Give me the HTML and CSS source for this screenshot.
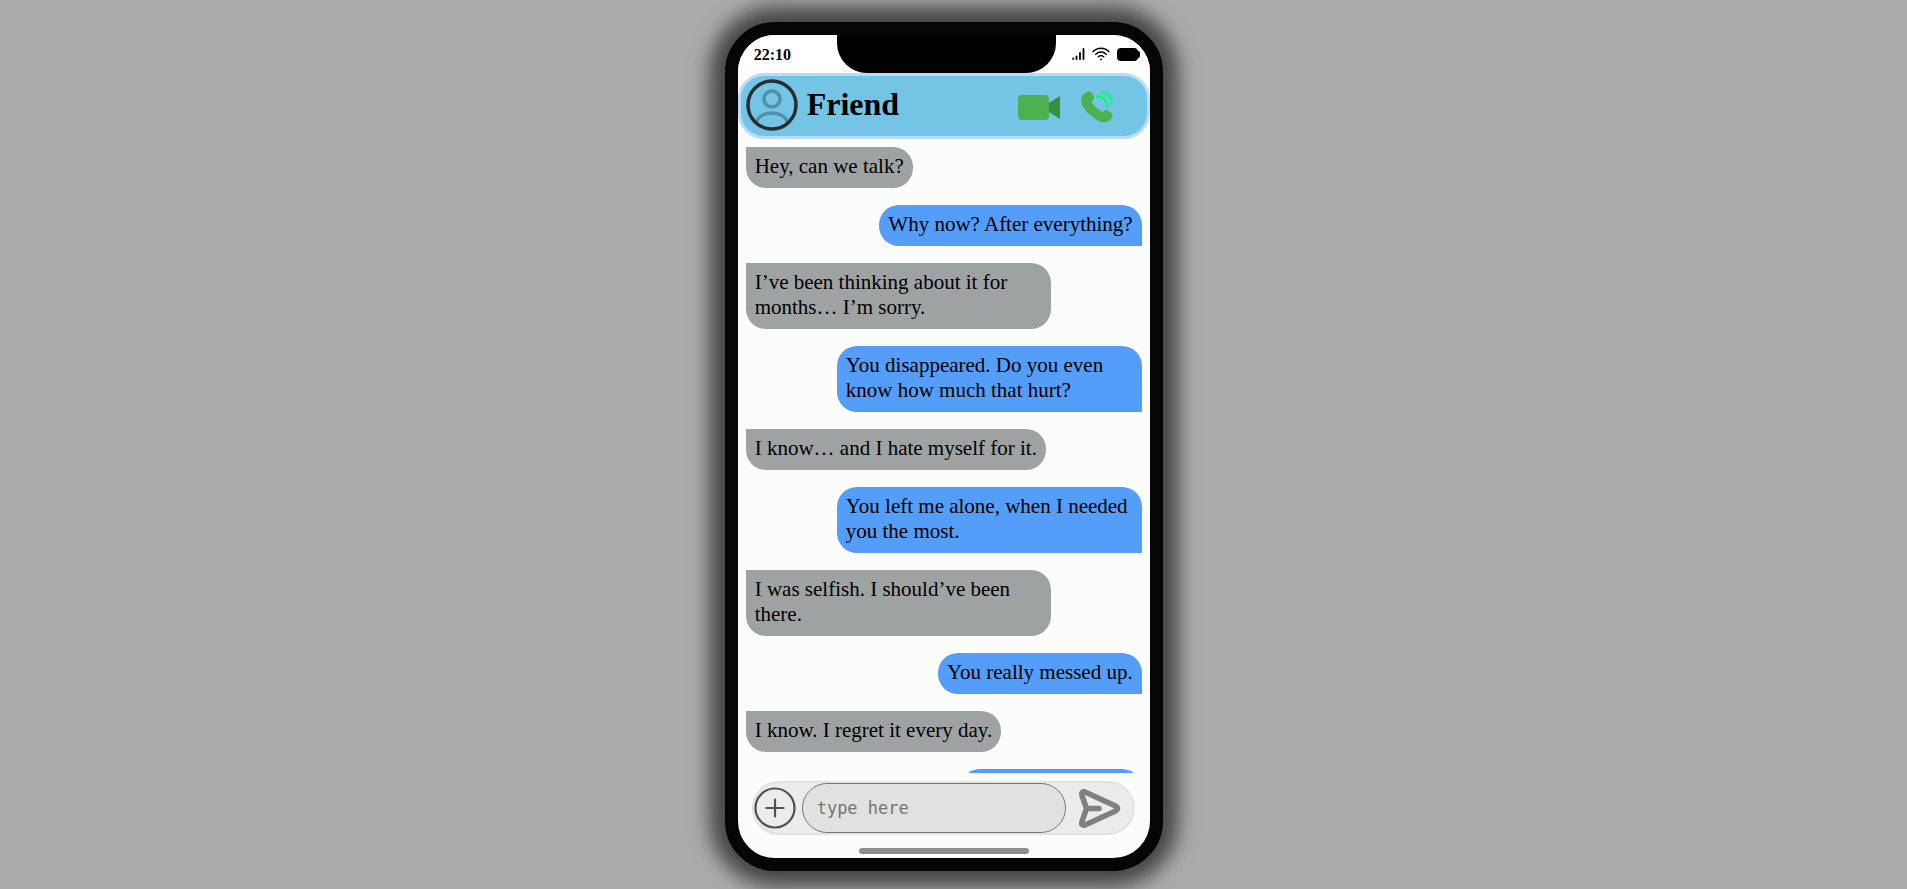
FILE: index.html
```html
<!DOCTYPE html>
<html lang="en">
<head>
<meta charset="utf-8">
<meta name="viewport" content="width=device-width, initial-scale=1">
<title>Friend</title>
<link rel="stylesheet" href="styles.css">
</head>
<body>
<main class="phone">
  <div class="status">
    <time class="clock">22:10</time>
    <div class="notch"></div>
    <div class="indicators">
      <svg class="signal" viewBox="0 0 13 12" aria-hidden="true"><path d="M1.2 10.500v.5M4.500 8.500v2.500M8 5v6M11.500 1v10" fill="none" stroke="#000" stroke-width="1.8" stroke-linecap="round"/></svg>
      <svg class="wifi" viewBox="0 0 18 14" aria-hidden="true"><g fill="none" stroke="#000" stroke-width="1.5" stroke-linecap="round"><path d="M1.2 4.6C5.4.2 12.6.2 16.8 4.6"/><path d="M3.8 7.2c2.900-2.800 7.500-2.800 10.400 0"/><path d="M6.300 9.800c1.500-1.400 3.900-1.400 5.400 0"/></g><circle cx="9" cy="12.400" r=".9"/></svg>
      <svg class="battery" viewBox="0 0 24 13" aria-hidden="true"><rect width="21" height="13" rx="4"/><rect x="19" y="3" width="4" height="7" rx="2"/></svg>
    </div>
  </div>
  <header class="top">
    <svg class="avatar" viewBox="0 0 52 52" role="img" aria-label="Profile picture"><g fill="none" stroke-width="3.500"><g stroke="#548faa"><circle cx="26" cy="20" r="8"/><path d="M10.500 42.500c2.500-5 8.500-8.500 15.500-8.500s13 3.500 15.500 8.500"/></g><circle cx="26" cy="26" r="24" stroke="#292d32"/></g></svg>
    <h1 class="name">Friend</h1>
    <div class="calls">
      <button class="icon-button" type="button" aria-label="Video call"><svg class="video" viewBox="0 0 42 25"><path d="M30 8.500 42 1v23l-12-7.500z" fill="#388e3c"/><rect width="31" height="25" rx="4" fill="#4caf50"/></svg></button>
      <button class="icon-button" type="button" aria-label="Voice call"><svg class="voice" viewBox="0 0 32 32"><path d="M8 .6C10 .6 10.700 1.800 12.200 4.400c1.200 2 .8 3.600-.8 5.100-.8.800-.6 1.700.2 2.700 2.300 3.200 5 5.800 8.100 8 1 .7 1.900.9 2.700.1 1.700-1.700 3.200-1.600 5.200-.4 2.600 1.600 3.900 2.400 3.900 4.400 0 3.400-4.200 7-8.500 7-3.500 0-6.300-1.200-9.200-3.500C9.600 24.600 5.400 20.600 2.800 16.900.8 14 .3 11.600.3 9.200.3 4.500 4.500.6 8 .6z" fill="#4caf50"/><g fill="none" stroke="#00ff6a" stroke-width="2" stroke-linecap="round"><path d="M16 5.500c6.500.2 10 4 10.200 10.300"/><path d="M19.800 1.400C26.300 1.400 31 6 31 12.600"/></g></svg></button>
    </div>
  </header>
  <section class="chat" aria-label="Messages">
    <p class="message received">Hey, can we talk?</p>
    <p class="message sent">Why now? After everything?</p>
    <p class="message received">I’ve been thinking about it for months… I’m sorry.</p>
    <p class="message sent">You disappeared. Do you even know how much that hurt?</p>
    <p class="message received">I know… and I hate myself for it.</p>
    <p class="message sent">You left me alone, when I needed you the most.</p>
    <p class="message received">I was selfish. I should’ve been there.</p>
    <p class="message sent">You really messed up.</p>
    <p class="message received">I know. I regret it every day.</p>
    <p class="message sent next"></p>
  </section>
  <form class="composer">
    <button class="icon-button" type="button" aria-label="Add attachment"><svg class="plus" viewBox="0 0 42 42"><g fill="none" stroke="#505050" stroke-width="2.200" stroke-linecap="round"><circle cx="21" cy="21" r="19.500"/><path d="M21 12.500v17M12.500 21h17"/></g></svg></button>
    <input class="field" type="text" placeholder="type here" aria-label="Message">
    <button class="icon-button send-button" type="submit" aria-label="Send"><svg class="send" viewBox="0 0 42 39"><path d="M7.500 19.500 3 6.500C2 3.400 4 2 6.600 3.200L36 16.800c3.300 1.500 3.300 3.900 0 5.400L6.600 35.800C4 37 2 35.600 3 32.500zM7.500 19.500H20" fill="none" stroke="#808080" stroke-width="5.500" stroke-linecap="round" stroke-linejoin="round"/></svg></button>
  </form>
  <div class="home-bar"></div>
</main>
</body>
</html>
```
FILE: styles.css
```css
* {
  box-sizing: border-box;
}

body {
  margin: 0;
  min-height: 100vh;
  padding: 22px 0 18px 38%;
  overflow: hidden;
  background: #acaaab;
  color: #000;
  font-family: "Liberation Serif", "Times New Roman", serif;
}

.phone {
  display: flex;
  flex-direction: column;
  width: 438px;
  max-width: 100%;
  height: calc(100vh - 40px);
  overflow: hidden;
  border: 13px solid #050505;
  border-radius: 50px;
  background: #fcfdfb;
  box-shadow: 0 0 20px 15px rgba(0, 0, 0, 0.6);
}

.status {
  display: grid;
  grid-template-columns: 18fr 40fr 17fr;
  flex: none;
  height: 38px;
  background: #fff;
}

.clock {
  align-self: center;
  padding: 2px 0 0 16px;
  font-size: 16px;
  font-weight: bold;
}

.notch {
  border-radius: 0 0 30px 30px;
  background: #000;
}

.indicators {
  display: flex;
  align-items: center;
  justify-content: flex-end;
  gap: 7px;
  padding-right: 9px;
}

svg {
  display: block;
}

.signal {
  width: 13px;
  height: 12px;
}

.wifi {
  width: 18px;
  height: 14px;
}

.battery {
  width: 24px;
  height: 13px;
}

.top {
  display: flex;
  flex: none;
  align-items: center;
  gap: 9px;
  height: 66px;
  padding: 0 34px 3px 5px;
  border: 3px solid #b9dcf8;
  border-radius: 26px;
  background: #74c4e6;
}

.avatar {
  width: 52px;
  height: 52px;
}

.name {
  margin: 0;
  font-size: 32px;
}

.calls {
  display: flex;
  align-items: center;
  gap: 21px;
  margin-left: auto;
  padding-top: 5px;
}

.icon-button {
  flex: none;
  padding: 0;
  border: 0;
  background: none;
}

.video {
  width: 42px;
  height: 25px;
}

.voice {
  width: 32px;
  height: 32px;
}

.chat {
  display: flex;
  flex: 1;
  flex-direction: column;
  align-items: flex-start;
  gap: 17px;
  min-height: 0;
  margin-bottom: 8px;
  padding: 8px 8px 0;
  overflow: hidden;
}

.message {
  flex: none;
  max-width: 77%;
  margin: 0;
  padding: 7px 9px 9px;
  font-size: 21px;
  line-height: 25px;
}

.received {
  border-radius: 0 20px 20px 20px;
  background: #9ea2a2;
}

.sent {
  align-self: flex-end;
  border-radius: 20px 20px 0 20px;
  background: #549df8;
}

.next {
  width: 46%;
  height: 41px;
}

.composer {
  display: flex;
  flex: none;
  align-items: center;
  gap: 6px;
  margin: 0 15px 0 14px;
  border: 2px solid #e2e2e0;
  border-radius: 28px;
  background: #ebebea;
}

.plus {
  width: 42px;
  height: 42px;
}

.field {
  flex: 1;
  min-width: 0;
  height: 50px;
  padding: 0 14px;
  border: 1px solid #767676;
  border-radius: 26px;
  background: #e1e1df;
  font-family: "DejaVu Sans Mono", monospace;
  font-size: 17px;
}

.send-button {
  padding: 0 12px 0 7px;
}

.send {
  width: 42px;
  height: 39px;
}

.home-bar {
  flex: none;
  align-self: center;
  width: 170px;
  height: 6px;
  margin: 13px 0 4px;
  border-radius: 3px;
  background: #8d8e8d;
}
```
